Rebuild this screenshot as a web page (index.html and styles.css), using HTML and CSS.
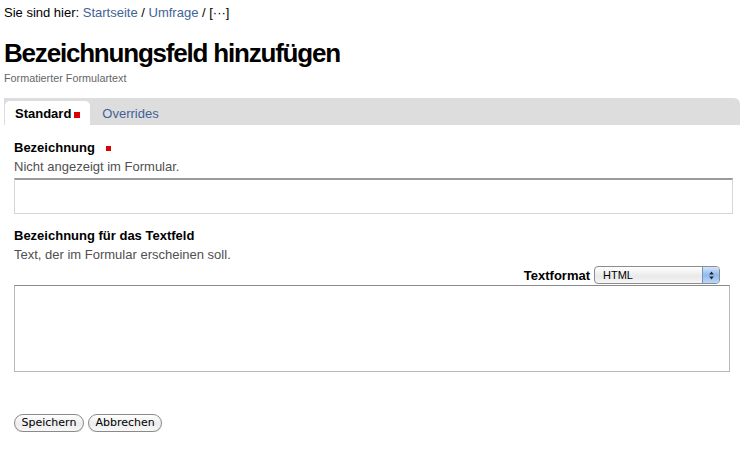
FILE: index.html
```html
<!DOCTYPE html>
<html lang="de">
<head>
<meta charset="utf-8">
<title>Bezeichnungsfeld hinzufügen</title>
<link rel="stylesheet" href="styles.css">
</head>
<body>
<div class="page">
  <div class="breadcrumb">Sie sind hier: <a href="#">Startseite</a> / <a href="#">Umfrage</a> / [···]</div>
  <h1 class="title">Bezeichnungsfeld hinzufügen</h1>
  <div class="subtitle">Formatierter Formulartext</div>

  <div class="tabs">
    <div class="tab active">Standard<span class="req"></span></div>
    <a class="tab" href="#">Overrides</a>
  </div>

  <div class="form">
    <div class="field">
      <div class="label">Bezeichnung<span class="req req-gap"></span></div>
      <div class="help">Nicht angezeigt im Formular.</div>
      <div class="input"></div>
    </div>

    <div class="field field2">
      <div class="label">Bezeichnung für das Textfeld</div>
      <div class="help">Text, der im Formular erscheinen soll.</div>
      <div class="format-row">
        <span class="format-label">Textformat</span>
        <div class="select">
          <span class="select-text">HTML</span>
          <span class="select-arrows">
            <svg width="7" height="11" viewBox="0 0 7 11"><path d="M3.5 1.5 L5.8 4.5 H1.2 Z" fill="#222"/><path d="M3.5 9.5 L5.8 6.5 H1.2 Z" fill="#222"/></svg>
          </span>
        </div>
      </div>
      <div class="textarea"></div>
    </div>

    <div class="buttons">
      <span class="btn">Speichern</span>
      <span class="btn">Abbrechen</span>
    </div>
  </div>
</div>
</body>
</html>
```
FILE: styles.css
```css
html, body {
  margin: 0;
  padding: 0;
  background: #fff;
}
body {
  font-family: "Liberation Sans", Arial, sans-serif;
  color: #000;
}
.page {
  padding: 5px 6px 0 4px;
}
.breadcrumb {
  font-size: 13px;
  line-height: 15px;
  color: #000;
}
.breadcrumb a {
  color: #3f6396;
  text-decoration: none;
}
.title {
  margin: 18px 0 0 0;
  font-size: 26px;
  line-height: 30px;
  font-weight: bold;
  letter-spacing: -1.2px;
}
.subtitle {
  margin-top: 4px;
  font-size: 10.8px;
  line-height: 13px;
  color: #666;
}
.tabs {
  margin-top: 13px;
  height: 24px;
  padding-top: 3px;
  background: #dddddd;
  border-top-right-radius: 6px;
  display: flex;
  align-items: stretch;
  padding-left: 1px;
}
.tab {
  font-size: 13px;
  line-height: 25px;
  padding: 0 12px;
  color: #3f6396;
  text-decoration: none;
  white-space: nowrap;
}
.tab.active {
  background: #fff;
  color: #000;
  font-weight: bold;
  border-radius: 5px 5px 0 0;
  padding: 0 10px 0 10px;
}
.req {
  display: inline-block;
  width: 6px;
  height: 6px;
  background: #dd0000;
  margin-left: 3px;
  vertical-align: 0px;
}
.req-gap {
  width: 5px;
  height: 5px;
  margin-left: 11px;
  vertical-align: 1px;
}
.form {
  padding: 15px 7px 0 10px;
}
.label {
  font-size: 13px;
  font-weight: bold;
  line-height: 15px;
}
.help {
  font-size: 13px;
  line-height: 15px;
  margin-top: 4px;
  color: #505050;
}
.input {
  margin-top: 4px;
  height: 33px;
  border: 1px solid #d6d6d6;
  border-top: 2px solid #9a9a9a;
}
.field2 {
  margin-top: 14px;
}
.format-row {
  display: flex;
  justify-content: flex-end;
  align-items: center;
  margin-top: 4px;
  padding-right: 13px;
  height: 18px;
}
.format-label {
  font-size: 13px;
  font-weight: bold;
  margin-right: 4px;
}
.select {
  width: 126px;
  height: 18px;
  border: 1px solid #8c8c8c;
  border-radius: 4px;
  background: linear-gradient(#ffffff, #e9e9e9 60%, #f6f6f6);
  display: flex;
  align-items: center;
  box-sizing: border-box;
  overflow: hidden;
}
.select-text {
  flex: 1;
  font-size: 11px;
  padding-left: 8px;
  color: #000;
}
.select-arrows {
  width: 16px;
  height: 100%;
  background: linear-gradient(#d4e6fc, #8fbaf0 50%, #bcd7f8);
  border-left: 1px solid #7a93b8;
  display: flex;
  align-items: center;
  justify-content: center;
}
.textarea {
  margin-top: 1px;
  margin-right: 3px;
  height: 85px;
  border: 1px solid #b8b8b8;
  border-top: 1px solid #8a8a8a;
}
.buttons {
  margin-top: 42px;
  display: flex;
  gap: 4px;
}
.btn {
  font-family: "DejaVu Sans", sans-serif;
  font-size: 11px;
  line-height: 16px;
  padding: 0 6.5px;
  border: 1px solid #8a8a8a;
  border-radius: 9px;
  background: linear-gradient(#ffffff, #ececec 55%, #f8f8f8);
  box-shadow: 0 1px 1px rgba(0,0,0,0.15);
  color: #000;
}
```
